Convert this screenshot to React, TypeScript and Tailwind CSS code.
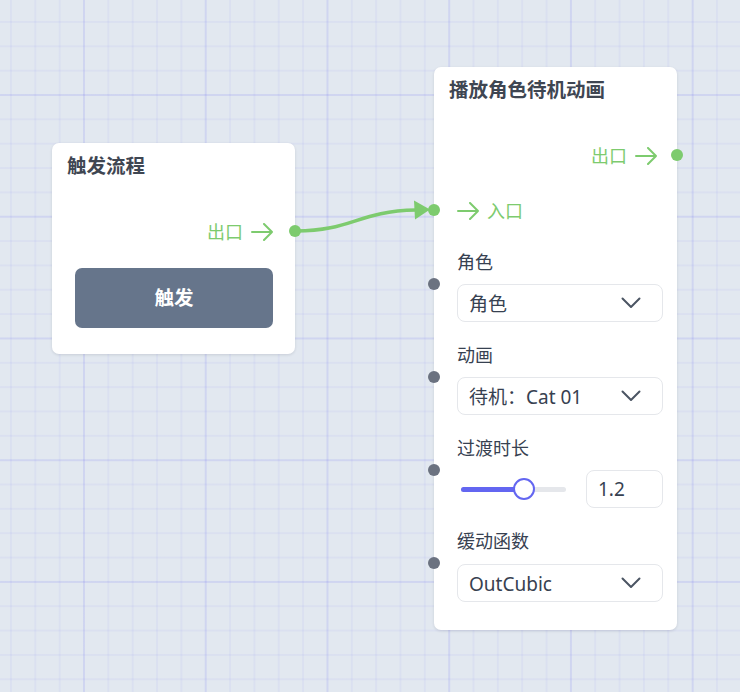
import React from 'react';

const font = "font-['Noto_Sans','Noto_Sans_CJK_SC',sans-serif]";

const Arrow: React.FC = () => (
  <svg width="22" height="18" viewBox="0 0 22 18" fill="none" stroke="#7dcb6e" strokeWidth="2" strokeLinecap="round" strokeLinejoin="round">
    <path d="M1 9H21M13 1L21 9L13 17" />
  </svg>
);

const Chevron: React.FC = () => (
  <svg width="20" height="12" viewBox="0 0 20 12" fill="none" stroke="#4b5563" strokeWidth="2" strokeLinecap="round" strokeLinejoin="round">
    <path d="M1.5 1.5L10 10L18.5 1.5" />
  </svg>
);

const GreenDot: React.FC<{ className: string }> = ({ className }) => (
  <div className={`absolute w-[12px] h-[12px] rounded-full bg-[#7dcb6e] ${className}`} />
);

const GrayDot: React.FC = () => (
  <div className="absolute left-[-29px] top-[28px] w-[12px] h-[12px] rounded-full bg-[#6b7280]" />
);

const Select: React.FC<{ value: string }> = ({ value }) => (
  <div className="mt-[10px] h-[38px] rounded-[8px] border border-[#e5e7eb] bg-white flex items-center justify-between pl-[11px] pr-[21px]">
    <span className="text-[19px] text-[#374151] translate-y-[1px]">{value}</span>
    <Chevron />
  </div>
);

const Field: React.FC<{ label: string; children: React.ReactNode; first?: boolean }> = ({ label, children, first }) => (
  <div className={`relative ${first ? 'mt-[27px]' : 'mt-[21px]'}`}>
    <GrayDot />
    <div className="text-[18px] leading-[24px] text-[#374151]">{label}</div>
    {children}
  </div>
);

export default function App() {
  return (
    <div
      className={`relative w-[740px] h-[692px] overflow-hidden bg-[#e2e8f0] ${font}
        bg-[image:linear-gradient(to_right,rgba(99,102,241,0.09)_2px,transparent_2px),linear-gradient(to_bottom,rgba(99,102,241,0.09)_2px,transparent_2px),linear-gradient(to_right,rgba(99,102,241,0.06)_2px,transparent_2px),linear-gradient(to_bottom,rgba(99,102,241,0.06)_2px,transparent_2px)]
        bg-[size:121.75px_121.75px,121.75px_121.75px,24.35px_24.35px,24.35px_24.35px]
        bg-[position:83px_94px,83px_94px,10px_21px,10px_21px]`}
    >
      {/* edge */}
      <svg className="absolute inset-0 pointer-events-none" width="740" height="692">
        <path d="M296 231 C 352 231, 358 211, 416 210" fill="none" stroke="#7dcb6e" strokeWidth="3.5" strokeLinecap="round" />
        <polygon points="414,200.5 430,209.5 415,219.5" fill="#7dcb6e" />
      </svg>

      {/* trigger node */}
      <div className="absolute left-[52px] top-[143px] w-[243px] h-[211px] rounded-[7px] bg-white shadow-[0_1px_3px_rgba(15,23,42,0.12)] pt-[11px] px-[23px]">
        <div className="-ml-[8px] text-[19.5px] leading-[24px] font-bold text-[#3f4652]">触发流程</div>
        <div className="relative mt-[42px] h-[24px] flex items-center justify-end gap-[8px] -mr-[1px]">
          <span className="text-[18px] text-[#7dcb6e]">出口</span>
          <Arrow />
          <GreenDot className="right-[-28px] top-[5px]" />
        </div>
        <button className="mt-[24px] w-[198px] h-[60px] rounded-[7px] bg-[#66758b] text-white text-[19.5px] font-bold flex items-center justify-center">
          触发
        </button>
      </div>

      {/* animation node */}
      <div className="absolute left-[434px] top-[67px] w-[243px] h-[563px] rounded-[7px] bg-white shadow-[0_1px_3px_rgba(15,23,42,0.12)] pt-[11px] px-[14px]">
        <div className="ml-[1px] text-[19.5px] leading-[24px] font-bold text-[#3f4652]">播放角色待机动画</div>
        <div className="relative mt-[42px] h-[24px] flex items-center justify-end gap-[8px] mr-[6px]">
          <span className="text-[18px] text-[#7dcb6e]">出口</span>
          <Arrow />
          <GreenDot className="right-[-26px] top-[5px]" />
        </div>
        <div className="pl-[9px]">
          <div className="relative mt-[31px] h-[24px] flex items-center gap-[8px]">
            <GreenDot className="left-[-29px] top-[5px]" />
            <Arrow />
            <span className="text-[18px] text-[#7dcb6e]">入口</span>
          </div>

          <Field label="角色" first>
            <Select value="角色" />
          </Field>

          <Field label="动画">
            <Select value="待机：Cat 01" />
          </Field>

          <Field label="过渡时长">
            <div className="mt-[10px] flex items-center gap-[20px]">
              <div className="flex-1 pl-[4px]">
                <div className="relative h-[5px] rounded-full bg-[#e5e7eb]">
                  <div className="absolute left-0 top-0 h-full w-[60%] rounded-full bg-[#6366f1]" />
                  <div className="absolute left-[60%] top-1/2 -translate-x-1/2 -translate-y-1/2 w-[22px] h-[22px] rounded-full bg-white border-[2.5px] border-[#6366f1]" />
                </div>
              </div>
              <div className="w-[77px] h-[38px] rounded-[8px] border border-[#e5e7eb] flex items-center pl-[11px] text-[19px] text-[#374151]">
                1.2
              </div>
            </div>
          </Field>

          <Field label="缓动函数">
            <div className="pt-[1px]">
              <Select value="OutCubic" />
            </div>
          </Field>
        </div>
      </div>
    </div>
  );
}
